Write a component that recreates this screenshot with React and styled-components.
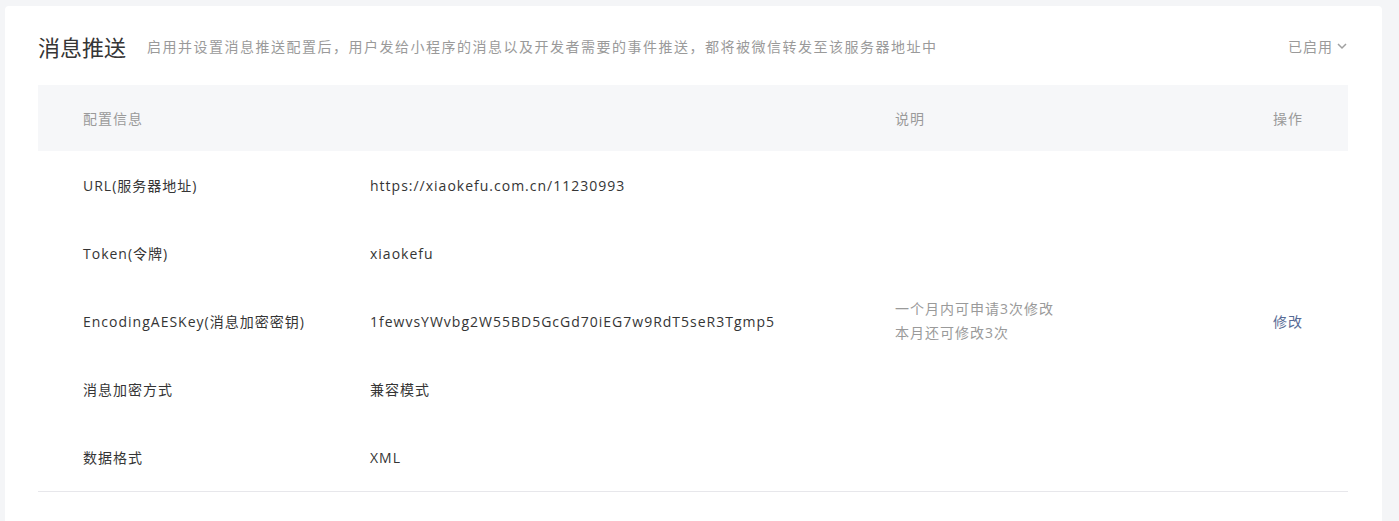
import React from 'react';
import styled, { createGlobalStyle } from 'styled-components';

const GlobalStyle = createGlobalStyle`
	body {
		margin: 0;
		background: #f4f5f7;
		font-family: "Open Sans", "Noto Sans CJK SC", sans-serif;
		color: #353535;
	}
`;

const Page = styled.div`
	padding: 6px 17px 0 5px;
`;

const Card = styled.div`
	background: #fff;
	border-radius: 4px 4px 0 0;
	padding: 0 34px 30px 33px;
	min-height: 515px;
	box-sizing: border-box;
	letter-spacing: 1px;
`;

const Header = styled.div`
	height: 79px;
	display: flex;
	align-items: center;
`;

const Title = styled.h2`
	margin: 0;
	font-size: 22px;
	font-weight: 400;
	letter-spacing: 0;
	color: #353535;
`;

const Subtitle = styled.span`
	margin-left: 21px;
	font-size: 14px;
	letter-spacing: 1.5px;
	color: #9a9a9a;
	flex: 1;
`;

const Status = styled.div`
	display: flex;
	align-items: center;
	gap: 3px;
	font-size: 14px;
	color: #9a9a9a;
`;

const Row = styled.div`
	display: grid;
	grid-template-columns: 287px 525px 378px 1fr;
	align-items: center;
	padding: 0 44px 0 45px;
	height: ${p => (p.$head ? '66px' : '68px')};
	background: ${p => (p.$head ? '#f6f7f9' : 'transparent')};
	font-size: 14px;
	color: ${p => (p.$head ? '#9a9a9a' : '#353535')};
`;

const Table = styled.div`
	border-bottom: 1px solid #e7e7eb;
`;

const Desc = styled.div`
	color: #9a9a9a;
	line-height: 24px;
`;

const Action = styled.a`
	color: #576b95;
	text-decoration: none;
	cursor: pointer;
`;

const Chevron = () => (
	<svg width="12" height="12" viewBox="0 0 12 12" fill="none">
		<path d="M2 4l4 4 4-4" stroke="#a0a0a0" strokeWidth="1.5" />
	</svg>
);

const rows = [
	['URL(服务器地址)', 'https://xiaokefu.com.cn/11230993'],
	['Token(令牌)', 'xiaokefu'],
	[
		'EncodingAESKey(消息加密密钥)',
		'1fewvsYWvbg2W55BD5GcGd70iEG7w9RdT5seR3Tgmp5',
		['一个月内可申请3次修改', '本月还可修改3次'],
		'修改',
	],
	['消息加密方式', '兼容模式'],
	['数据格式', 'XML'],
];

const App = () => (
	<Page>
		<GlobalStyle />
		<Card>
			<Header>
				<Title>消息推送</Title>
				<Subtitle>
					启用并设置消息推送配置后，用户发给小程序的消息以及开发者需要的事件推送，都将被微信转发至该服务器地址中
				</Subtitle>
				<Status>
					已启用
					<Chevron />
				</Status>
			</Header>
			<Table>
				<Row $head>
					<span>配置信息</span>
					<span />
					<span>说明</span>
					<span>操作</span>
				</Row>
				{rows.map(([label, value, desc, action]) => (
					<Row key={label}>
						<span>{label}</span>
						<span>{value}</span>
						<Desc>
							{desc && desc.map(line => <div key={line}>{line}</div>)}
						</Desc>
						<span>{action && <Action>{action}</Action>}</span>
					</Row>
				))}
			</Table>
		</Card>
	</Page>
);

export default App;
